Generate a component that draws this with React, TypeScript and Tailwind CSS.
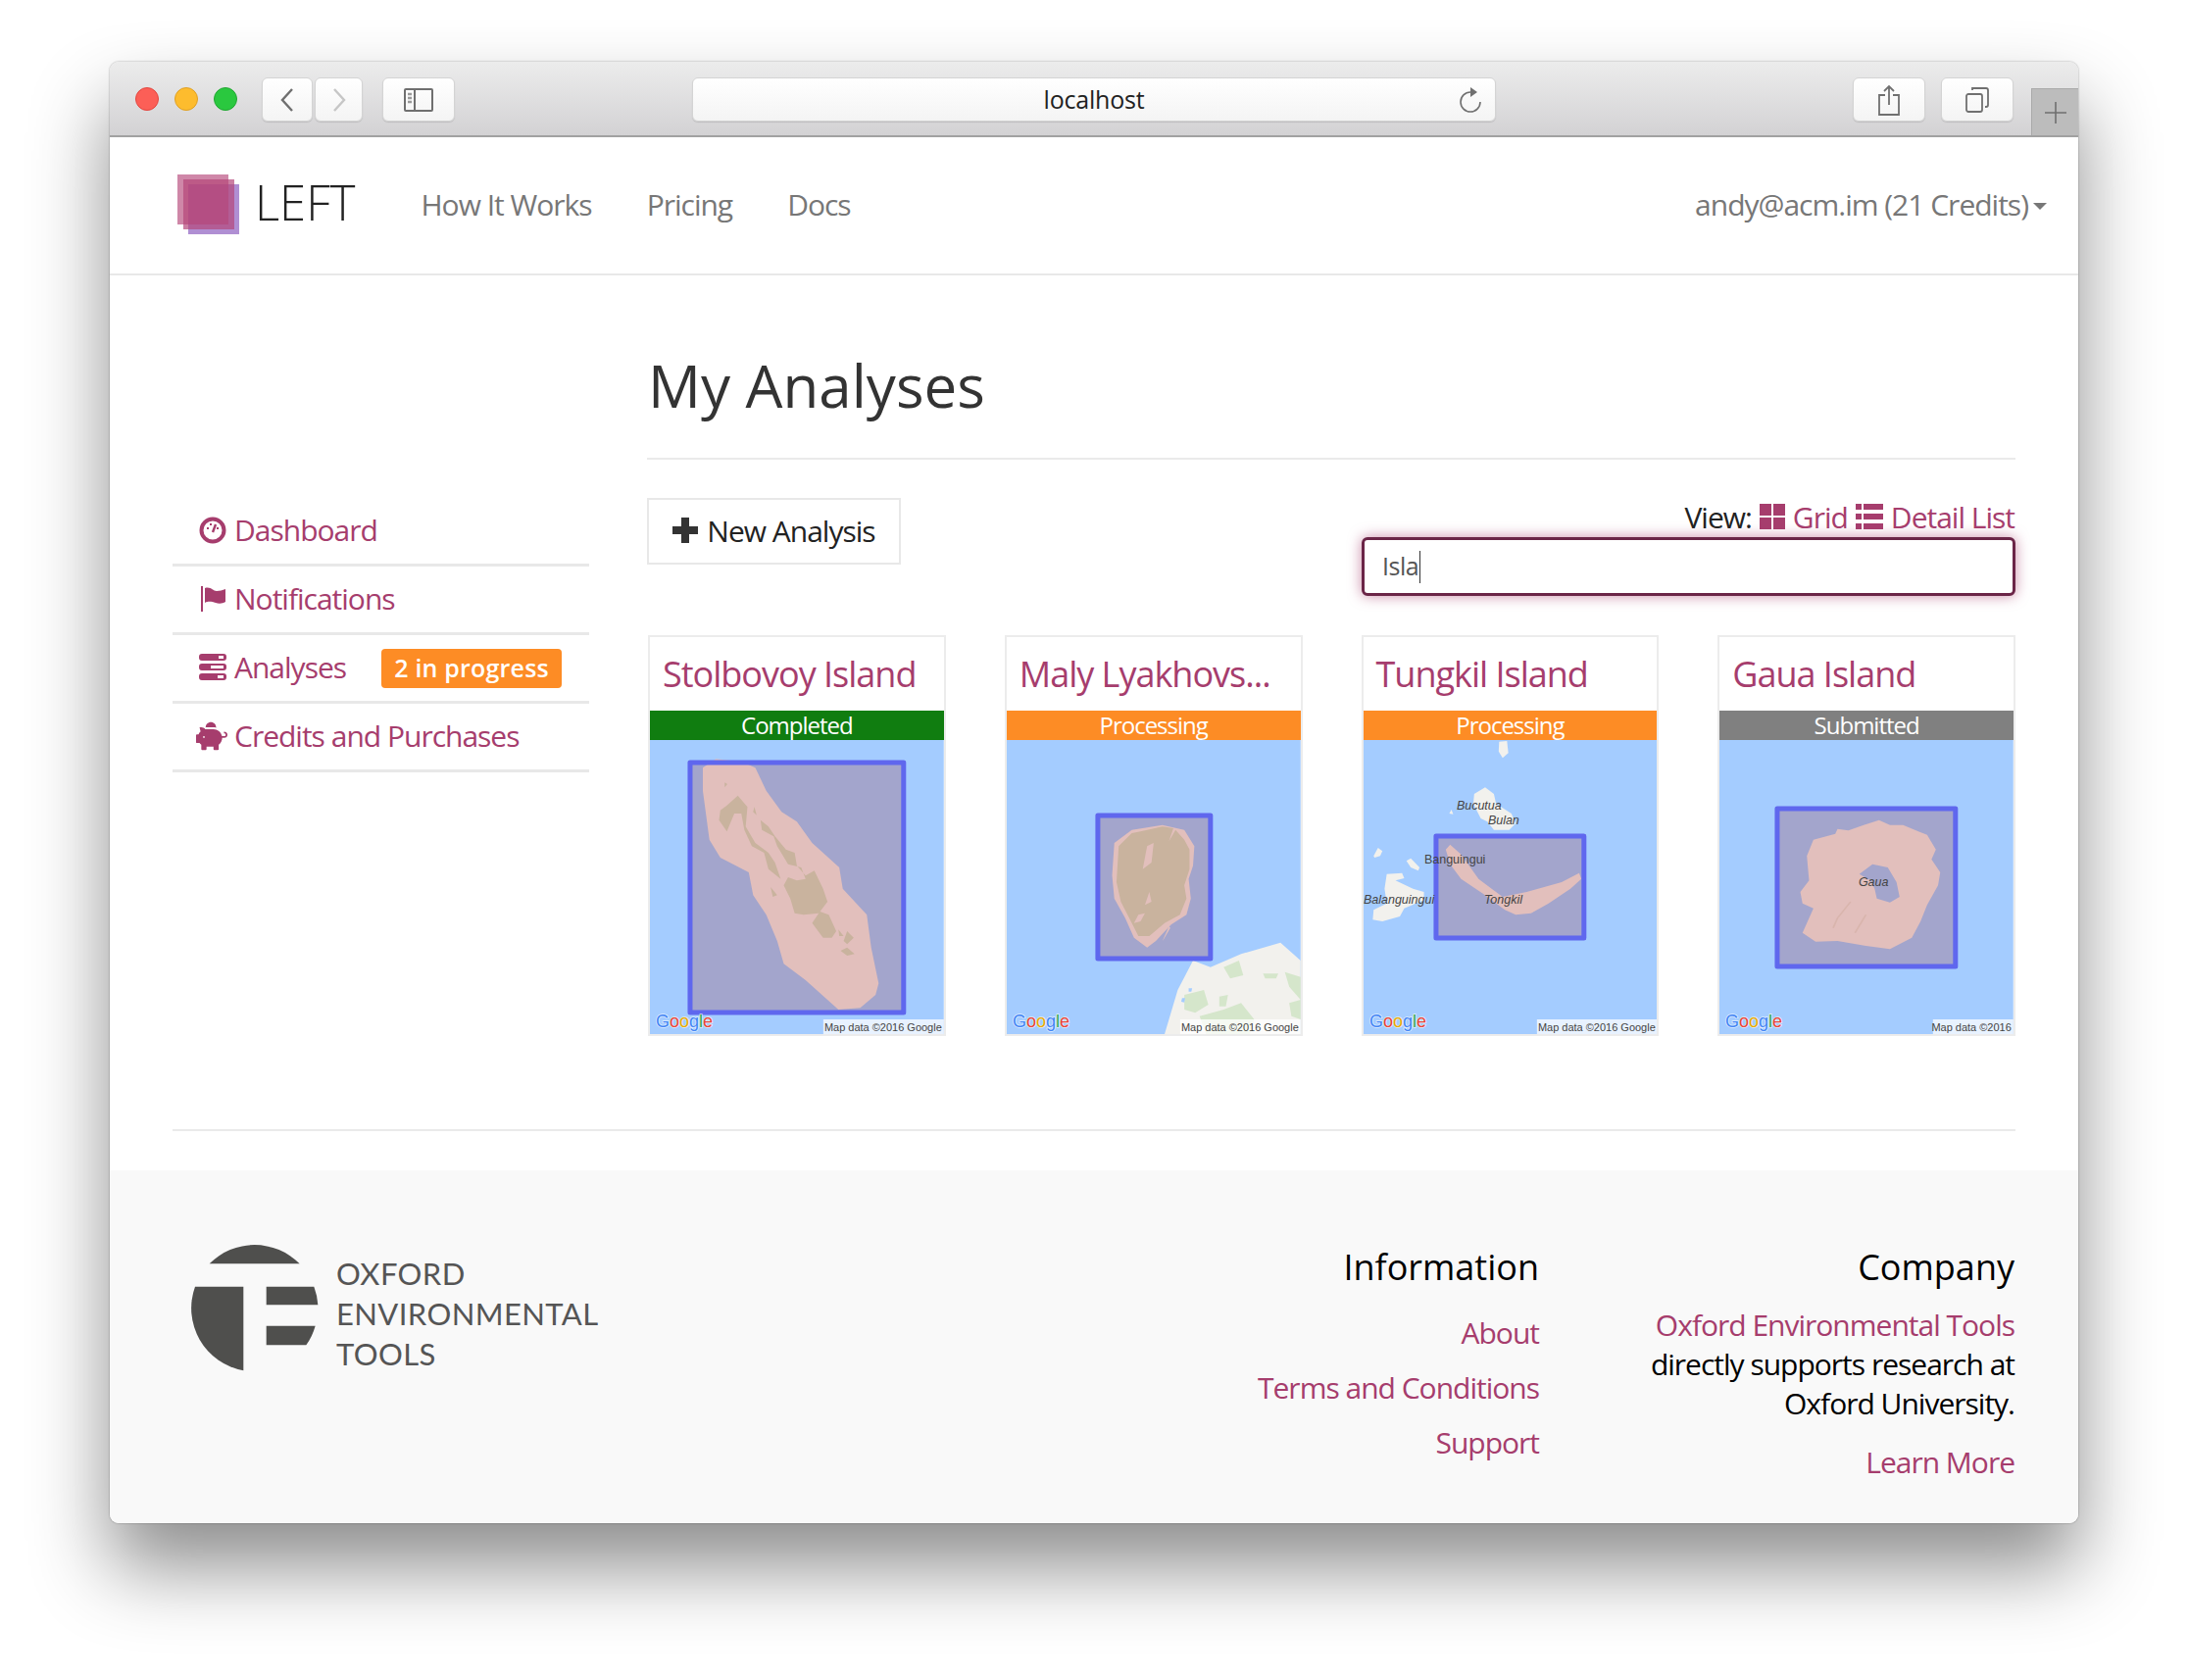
import { FaPiggyBank } from "react-icons/fa";

const link = "text-[#a63d6d]";

function ToolButton({ className, children }: { className: string; children?: React.ReactNode }) {
  return (
    <div className={`flex h-[45px] items-center justify-center rounded-[6px] border border-[#d4d4d4] bg-gradient-to-b from-white to-[#f4f4f4] shadow-[0_1px_1px_rgba(0,0,0,0.12)] ${className}`}>
      {children}
    </div>
  );
}

function BrowserBar() {
  return (
    <div className="relative flex h-[77px] shrink-0 items-start rounded-t-[9px] border-b-2 border-[#a1a1a1] bg-gradient-to-b from-[#ececec] to-[#d3d2d4] pl-[26px] pt-[16px]">
      <div className="mt-[10px] flex gap-[16px]">
        <div className="h-[24px] w-[24px] rounded-full border border-[#e2463f] bg-[#fc5f57]" />
        <div className="h-[24px] w-[24px] rounded-full border border-[#dfa024] bg-[#fdbc2e]" />
        <div className="h-[24px] w-[24px] rounded-full border border-[#21a632] bg-[#2ac83f]" />
      </div>
      <div className="ml-[25px] flex gap-[2px]">
        <ToolButton className="w-[52px]">
          <svg width="18" height="26" viewBox="0 0 18 26" fill="none" stroke="#6f6f6f" strokeWidth="2.4">
            <path d="M14 2 4 13l10 11" />
          </svg>
        </ToolButton>
        <ToolButton className="w-[49px]">
          <svg width="18" height="26" viewBox="0 0 18 26" fill="none" stroke="#c6c6c6" strokeWidth="2.4">
            <path d="m4 2 10 11L4 24" />
          </svg>
        </ToolButton>
      </div>
      <ToolButton className="ml-[20px] w-[74px]">
        <svg width="30" height="24" viewBox="0 0 30 24" fill="none" stroke="#6f6f6f" strokeWidth="2">
          <rect x="1" y="1" width="28" height="22" rx="1" />
          <path d="M11 1v22" />
          <path d="M4 6h4M4 10h4M4 14h4" strokeWidth="2.4" stroke="#9a9a9a" />
        </svg>
      </ToolButton>
      <ToolButton className="relative ml-[242px] w-[820px]">
        <span className="text-[25px] tracking-[-0.2px] text-[#222]">localhost</span>
        <svg className="absolute right-[12px] top-[7px]" width="26" height="28" viewBox="0 0 26 28" fill="none" stroke="#707070" strokeWidth="1.6">
          <path d="M13 7a10 10 0 1 0 10 10" />
          <path d="M13 2l7 5-7 5z" fill="#707070" stroke="none" />
        </svg>
      </ToolButton>
      <ToolButton className="ml-[364px] w-[74px]">
        <svg width="24" height="32" viewBox="0 0 24 32" fill="none" stroke="#707070" strokeWidth="1.8">
          <path d="M8 11H2v20h20V11h-6" />
          <path d="M12 21V2M7 7l5-5 5 5" />
        </svg>
      </ToolButton>
      <ToolButton className="ml-[16px] w-[74px]">
        <svg width="24" height="26" viewBox="0 0 24 26" fill="none" stroke="#707070" strokeWidth="1.8">
          <rect x="1" y="7" width="16" height="18" rx="2" />
          <path d="M7 3V1h14a2 2 0 0 1 2 2v15a2 2 0 0 1-2 2h-1" />
        </svg>
      </ToolButton>
      <div className="absolute bottom-0 right-0 flex h-[48px] w-[48px] items-center justify-center border-l border-t border-[#a9a9a9] bg-[#bcbcbc]">
        <svg width="24" height="24" viewBox="0 0 24 24" stroke="#6f6f6f" strokeWidth="1.6">
          <path d="M12 1v22M1 12h22" />
        </svg>
      </div>
    </div>
  );
}

function TopNav() {
  return (
    <div className="flex h-[141px] shrink-0 items-center border-b-2 border-[#e8e8e8] pb-[2px] pl-[69px] pr-[32px] text-[30px] tracking-[-1px] text-[#777]">
      <div className="relative mr-[16px] h-[62px] w-[63px]">
        <div className="absolute left-[11px] top-[10px] h-[51px] w-[52px] bg-[#8f5fc0]/70" />
        <div className="absolute left-[6px] top-[5px] h-[51px] w-[52px] bg-[#b5477a]/70" />
        <div className="absolute left-0 top-0 h-[51px] w-[52px] bg-[#b5477a]/65" />
      </div>
      <span className="mb-[4px] mr-[67px] text-[49px] font-light leading-none tracking-normal text-[#222]">LEFT</span>
      <div className="flex gap-[56px]">
        <span>How It Works</span>
        <span>Pricing</span>
        <span>Docs</span>
      </div>
      <div className="ml-auto flex items-center gap-[5px]">
        <span>andy@acm.im (21 Credits)</span>
        <span className="mt-[3px] h-0 w-0 border-x-[7px] border-t-[7px] border-x-transparent border-t-[#777]" />
      </div>
    </div>
  );
}

function SideRow({ icon, label, badge }: { icon: React.ReactNode; label: string; badge?: string }) {
  return (
    <div className={`flex h-[70px] items-center border-b-[3px] border-[#e8e8e8] pb-[2px] pl-[27px] text-[30px] tracking-[-1px] ${link}`}>
      <span className="flex w-[36px] shrink-0 items-center">{icon}</span>
      <span>{label}</span>
      {badge && (
        <span className="ml-[36px] mt-[2px] flex h-[40px] w-[184px] items-center justify-center rounded-[4px] bg-[#fd8c25] text-[25px] font-semibold tracking-[0.2px] text-white">
          {badge}
        </span>
      )}
    </div>
  );
}

function Sidebar() {
  return (
    <div className="w-[425px] shrink-0 pt-[227px]">
      <SideRow
        label="Dashboard"
        icon={
          <svg width="28" height="28" viewBox="0 0 28 28" fill="none">
            <circle cx="14" cy="14" r="11.5" stroke="#a63d6d" strokeWidth="4" />
            <path d="m14 16 3-8" stroke="#a63d6d" strokeWidth="2.4" />
            <path d="M8 12h2M11 8h2M18 12h2" stroke="#a63d6d" strokeWidth="2" />
          </svg>
        }
      />
      <SideRow
        label="Notifications"
        icon={
          <svg width="28" height="28" viewBox="0 0 28 28" fill="#a63d6d">
            <rect x="2" y="1" width="2" height="26" />
            <path d="M6 3c6-2 8 3 12 3 3 0 6-1 9-2v13c-3 2-7 2-10 1-4-1-7-2-11 0z" />
          </svg>
        }
      />
      <SideRow
        label="Analyses"
        badge="2 in progress"
        icon={
          <svg width="28" height="27" viewBox="0 0 28 27" fill="#a63d6d">
            <path fillRule="evenodd" d="M3 0h22a3 3 0 0 1 3 3v1a3 3 0 0 1-3 3H3a3 3 0 0 1-3-3V3a3 3 0 0 1 3-3zm17 2v3h5V2z" />
            <path fillRule="evenodd" d="M3 10h22a3 3 0 0 1 3 3v1a3 3 0 0 1-3 3H3a3 3 0 0 1-3-3v-1a3 3 0 0 1 3-3zm9 2v3h13v-3z" />
            <path fillRule="evenodd" d="M3 20h22a3 3 0 0 1 3 3v1a3 3 0 0 1-3 3H3a3 3 0 0 1-3-3v-1a3 3 0 0 1 3-3zm16 2v3h6v-3z" />
          </svg>
        }
      />
      <SideRow label="Credits and Purchases" icon={<FaPiggyBank size={32} className="-ml-[3px] -scale-x-100" />} />
    </div>
  );
}

const pts = (list: number[]) => list.join(" ");

function Stolbovoy() {
  return (
    <>
      <polygon fill="#e2bfbc" points={pts([150,430,180,403,240,412,270,430,295,500,330,565,365,595,400,660,462,735,470,800,525,880,535,980,552,1090,545,1125,510,1165,460,1170,385,1080,335,1030,320,960,295,880,265,820,255,750,190,705,165,650,150,500])} />
      <polygon fill="#c9b39e" points={pts([190,560,205,545,230,515,252,550,248,610,270,660,300,690,315,720,328,770,300,740,290,690,262,670,245,620,238,570,222,570,205,625,187,590])} />
      <polygon fill="#c9b39e" points={pts([282,590,300,610,315,640,340,680,360,690,365,730,385,760,405,745,425,800,435,840,418,870,438,880,455,930,445,950,425,950,400,905,415,875,380,880,360,875,350,830,335,790,345,765,365,775,385,770,375,735,345,725,320,670,312,640,285,620])} />
      <polygon fill="#c9b39e" points={pts([465,990,480,980,497,1000,480,1005])} />
      <polygon fill="#c9b39e" points={pts([480,930,495,950,480,970,472,960])} />
      <polygon fill="#c9b39e" points={pts([305,795,320,820,310,825])} />
      <polygon fill="#c9b39e" points={pts([268,550,273,575,265,565])} />
      <polygon fill="#c9b39e" points={pts([200,475,206,480,200,490])} />
      <polygon fill="#c9b39e" points={pts([460,925,472,945,462,945])} />
    </>
  );
}

function Maly() {
  return (
    <>
      <polygon fill="#f2f1ed" points={pts([1205,1245,1235,1110,1270,1020,1310,1040,1380,1000,1470,965,1516,1020,1516,1245])} />
      <polygon fill="#d5e6cb" points={pts([1340,1040,1375,1020,1385,1065,1355,1075])} />
      <polygon fill="#d5e6cb" points={pts([1430,1060,1465,1060,1460,1075,1435,1075])} />
      <polygon fill="#d5e6cb" points={pts([1480,1055,1516,1070,1516,1140,1490,1100])} />
      <polygon fill="#d5e6cb" points={pts([1250,1125,1295,1110,1305,1155,1275,1180,1250,1170])} />
      <polygon fill="#d5e6cb" points={pts([1330,1130,1350,1125,1345,1160,1330,1160])} />
      <polygon fill="#d5e6cb" points={pts([1285,1190,1340,1170,1380,1150,1410,1200,1400,1245,1300,1245])} />
      <polygon fill="#d5e6cb" points={pts([1490,1150,1516,1140,1516,1200,1495,1190])} />
      <polygon fill="#a4ccff" points={pts([1245,1135,1252,1135,1250,1148,1243,1146])} />
      <polygon fill="#a4ccff" points={pts([1260,1105,1268,1105,1266,1115,1260,1115])} />
    </>
  );
}

function MalyIsland() {
  return (
    <>
      <polygon fill="#e2bfbc" points={pts([1090,660,1130,620,1200,605,1250,620,1273,670,1270,730,1260,770,1265,830,1255,880,1220,910,1185,960,1165,980,1135,950,1115,890,1090,830,1085,760])} />
      <polygon fill="#c9b39e" points={pts([1100,670,1130,630,1150,625,1200,610,1225,615,1215,655,1230,620,1250,650,1262,680,1262,740,1250,790,1255,830,1240,880,1205,905,1170,945,1145,945,1130,905,1105,840,1095,780])} />
      <polygon fill="#e2bfbc" points={pts([1165,670,1180,660,1175,720,1155,740])} />
      <polygon fill="#e2bfbc" points={pts([1160,875,1150,900,1135,905,1145,880])} />
      <polygon fill="#e2bfbc" points={pts([1170,810,1175,840,1160,850])} />
      <polygon fill="#e2bfbc" points={pts([1200,960,1215,915,1218,920,1205,950])} />
    </>
  );
}

function Tungkil() {
  return (
    <>
      <polygon fill="#f2f1ed" points={pts([357,350,375,348,378,385,365,400,356,380])} />
      <polygon fill="#f2f1ed" points={pts([300,510,325,490,345,510,350,540,385,570,395,600,380,620,345,620,330,595,315,585,298,540])} />
      <polygon fill="#f2f1ed" points={pts([243,570,248,558,252,572])} />
      <polygon fill="#f2f1ed" points={pts([70,700,80,675,90,685,85,700,72,705])} />
      <polygon fill="#f2f1ed" points={pts([145,715,155,707,175,735,172,745,155,735])} />
      <polygon fill="#f2f1ed" points={pts([100,755,135,752,140,768,120,775,160,800,185,810,185,835,140,860,130,885,90,900,68,895,70,865,100,845,95,800])} />
    </>
  );
}

function TungkilIsland() {
  return <polygon fill="#e2bfbc" points={pts([235,680,245,665,270,695,310,770,365,825,420,810,500,780,540,752,545,770,520,800,470,845,430,875,395,880,370,865,320,815,270,770,245,725])} />;
}

function GauaIsland() {
  return (
    <>
      <path
        fill="#e2bfbc"
        fillRule="evenodd"
        d="M1075 650 1125 632 1130 617 1155 622 1190 605 1225 590 1250 605 1280 605 1315 625 1335 635 1355 680 1345 710 1365 750 1360 790 1335 850 1320 900 1300 950 1250 985 1195 975 1130 960 1080 962 1050 935 1075 860 1050 845 1045 810 1065 775 1060 700ZM1180 755 1210 725 1245 735 1265 780 1272 825 1250 842 1220 830 1215 800 1205 775Z"
      />
      <path d="M1160 840 1130 890 1120 920M1195 880 1170 935" fill="none" stroke="#d9b5ad" strokeWidth="4" />
    </>
  );
}

type Box = { x: number; y: number; w: number; h: number };

function MapView({
  offset,
  box,
  under,
  over,
  labels,
  attribution,
}: {
  offset: number;
  box: Box;
  under?: React.ReactNode;
  over?: React.ReactNode;
  labels?: React.ReactNode;
  attribution: string;
}) {
  const attrWidth = attribution.length > 14 ? 123 : 82;
  return (
    <svg className="block" width="100%" height="300" viewBox="0 0 300 300" preserveAspectRatio="none">
      <rect width="300" height="300" fill="#a4ccff" />
      <g transform={`scale(${1 / 2.24} ${1 / 3}) translate(${-offset} -345)`}>{under}</g>
      <rect x={box.x} y={box.y} width={box.w} height={box.h} fill="#a3a5cc" />
      <g transform={`scale(${1 / 2.24} ${1 / 3}) translate(${-offset} -345)`}>{over}</g>
      <rect x={box.x + 2} y={box.y + 2} width={box.w - 4} height={box.h - 4} fill="none" stroke="#5f67ee" strokeWidth="5" strokeLinejoin="round" />
      {labels}
      <text x="6" y="293" fontFamily="Liberation Sans, sans-serif" fontSize="18" stroke="#fff" strokeOpacity="0.7" strokeWidth="1.5" paintOrder="stroke">
        <tspan fill="#4285f4">G</tspan>
        <tspan fill="#ea4335">o</tspan>
        <tspan fill="#e8a900">o</tspan>
        <tspan fill="#4285f4">g</tspan>
        <tspan fill="#34a853">l</tspan>
        <tspan fill="#ea4335">e</tspan>
      </text>
      <rect x={300 - attrWidth} y="285" width={attrWidth} height="15" fill="#fff" opacity="0.75" />
      <text x="298" y="297" textAnchor="end" fontFamily="Liberation Sans, sans-serif" fontSize="11" fill="#444">
        {attribution}
      </text>
    </svg>
  );
}

function MapLabel({ x, y, italic, children }: { x: number; y: number; italic?: boolean; children: string }) {
  return (
    <text x={x} y={y} fontFamily="Liberation Sans, sans-serif" fontSize="12.5" fontStyle={italic ? "italic" : "normal"} fill="#444">
      {children}
    </text>
  );
}

function Card({ title, status, tone, children }: { title: string; status: string; tone: string; children: React.ReactNode }) {
  return (
    <div className="min-w-0 border-[2px] border-[#ececec]">
      <div className={`flex h-[75px] items-center truncate pl-[13px] text-[36px] tracking-[-1px] ${link}`}>{title}</div>
      <div className={`flex h-[30px] items-center justify-center text-[24px] tracking-[-1px] text-white ${tone}`}>{status}</div>
      {children}
    </div>
  );
}

function Main() {
  return (
    <div className="min-w-0 flex-1">
      <h1 className="flex h-[186px] items-center pb-[9px] pl-[1px] pt-[47px] text-[60px] leading-none text-[#333]">My Analyses</h1>
      <div className="border-t-2 border-[#eaeaea]" />
      <div className="mt-[39px] flex justify-between">
        <div className="flex h-[68px] w-[259px] items-center justify-center gap-[9px] border-2 border-[#e8e8e8] pb-[2px] text-[30px] tracking-[-1px] text-[#222]">
          <svg width="26" height="26" viewBox="0 0 26 26" fill="#333">
            <path d="M9 0h8v9h9v8h-9v9H9v-9H0V9h9z" />
          </svg>
          New Analysis
        </div>
        <div className="w-[667px]">
          <div className="flex h-[38px] items-center justify-end gap-[8px] pr-[1px] text-[30px] tracking-[-1px] text-[#222]">
            <span>View:</span>
            <svg width="26" height="26" viewBox="0 0 26 26" fill="#a63d6d">
              <path d="M0 0h12v12H0zM14 0h12v12H14zM0 14h12v12H0zM14 14h12v12H14z" />
            </svg>
            <span className={link}>Grid</span>
            <svg width="28" height="26" viewBox="0 0 28 26" fill="#a63d6d">
              <path d="M0 0h6v6H0zM8 0h20v6H8zM0 10h6v6H0zM8 10h20v6H8zM0 20h6v6H0zM8 20h20v6H8z" />
            </svg>
            <span className={link}>Detail List</span>
          </div>
          <div className="mt-[2px] flex h-[60px] items-center rounded-[6px] border-[3px] border-[#6b2547] bg-white pl-[18px] text-[25px] tracking-[-0.5px] text-[#555] shadow-[0_0_14px_rgba(168,62,109,0.6)]">
            Isla
            <span className="ml-[1px] h-[33px] w-[1px] bg-[#333]" />
          </div>
        </div>
      </div>
      <div className="mt-[40px] grid grid-cols-4 gap-[60px] pl-[1px]">
        <Card title="Stolbovoy Island" status="Completed" tone="bg-[#107d10]">
          <MapView offset={29} box={{ x: 39, y: 21, w: 222, h: 259 }} over={<Stolbovoy />} attribution="Map data ©2016 Google" />
        </Card>
        <Card title="Maly Lyakhovs..." status="Processing" tone="bg-[#fd8c25]">
          <MapView offset={844} box={{ x: 91, y: 75, w: 119, h: 150 }} under={<Maly />} over={<MalyIsland />} attribution="Map data ©2016 Google" />
        </Card>
        <Card title="Tungkil Island" status="Processing" tone="bg-[#fd8c25]">
          <MapView
            offset={47}
            box={{ x: 72, y: 96, w: 155, h: 108 }}
            under={<Tungkil />}
            over={<TungkilIsland />}
            attribution="Map data ©2016 Google"
            labels={
              <>
                <MapLabel x={95} y={71} italic>Bucutua</MapLabel>
                <MapLabel x={127} y={86} italic>Bulan</MapLabel>
                <MapLabel x={62} y={126}>Banguingui</MapLabel>
                <MapLabel x={0} y={167} italic>Balanguingui</MapLabel>
                <MapLabel x={123} y={167} italic>Tongkil</MapLabel>
              </>
            }
          />
        </Card>
        <Card title="Gaua Island" status="Submitted" tone="bg-[#808080]">
          <MapView
            offset={860}
            box={{ x: 57, y: 68, w: 186, h: 165 }}
            over={<GauaIsland />}
            attribution="Map data ©2016"
            labels={<MapLabel x={142} y={149} italic>Gaua</MapLabel>}
          />
        </Card>
      </div>
    </div>
  );
}

function Footer() {
  return (
    <div className="flex h-[360px] rounded-b-[9px] bg-[#f9f9f9] pl-[83px] pr-[65px] text-[30px] leading-[40px]">
      <div className="flex pt-[76px]">
        <svg width="130" height="130" viewBox="76 90 390 390" fill="#4f4f4d">
          <path d="M132 148a194 194 0 0 1 276 0z" />
          <path d="M236 218H88A194 194 0 0 0 236 475z" />
          <path d="M306 218h146a194 194 0 0 1 12 56H306z" />
          <path d="M306 338h150a194 194 0 0 1-28 59H306z" />
        </svg>
        <div className="ml-[18px] mt-[9px] font-['Lato',sans-serif] text-[31px] leading-[41px] tracking-[0.4px] text-[#555]">
          <div>OXFORD</div>
          <div>ENVIRONMENTAL</div>
          <div>TOOLS</div>
        </div>
      </div>
      <div className="ml-auto w-[340px] whitespace-nowrap pt-[79px] text-right">
        <div className="text-[36px] text-black">Information</div>
        <div className={`mt-[27px] tracking-[-1px] ${link}`}>About</div>
        <div className={`mt-[16px] tracking-[-1px] ${link}`}>Terms and Conditions</div>
        <div className={`mt-[16px] tracking-[-1px] ${link}`}>Support</div>
      </div>
      <div className="ml-[75px] w-[410px] whitespace-nowrap pt-[79px] text-right">
        <div className="text-[36px] text-black">Company</div>
        <div className={`mt-[19px] tracking-[-1px] ${link}`}>Oxford Environmental Tools</div>
        <div className="tracking-[-1px] text-black">directly supports research at</div>
        <div className="tracking-[-1px] text-black">Oxford University.</div>
        <div className={`mt-[20px] tracking-[-1px] ${link}`}>Learn More</div>
      </div>
    </div>
  );
}

export default function App() {
  return (
    <div className="h-[1714px] overflow-hidden bg-white pl-[112px] pt-[63px] font-['Open_Sans',sans-serif]">
      <div className="flex h-[1491px] w-[2008px] flex-col rounded-[9px] bg-white shadow-[0_45px_80px_rgba(0,0,0,0.45),0_0_2px_rgba(0,0,0,0.4)]">
        <BrowserBar />
        <TopNav />
        <div className="flex flex-1 gap-[59px] px-[64px]">
          <Sidebar />
          <Main />
        </div>
        <div className="mx-[64px] border-t-2 border-[#eaeaea]" />
        <div className="h-[40px] shrink-0" />
        <Footer />
      </div>
    </div>
  );
}
